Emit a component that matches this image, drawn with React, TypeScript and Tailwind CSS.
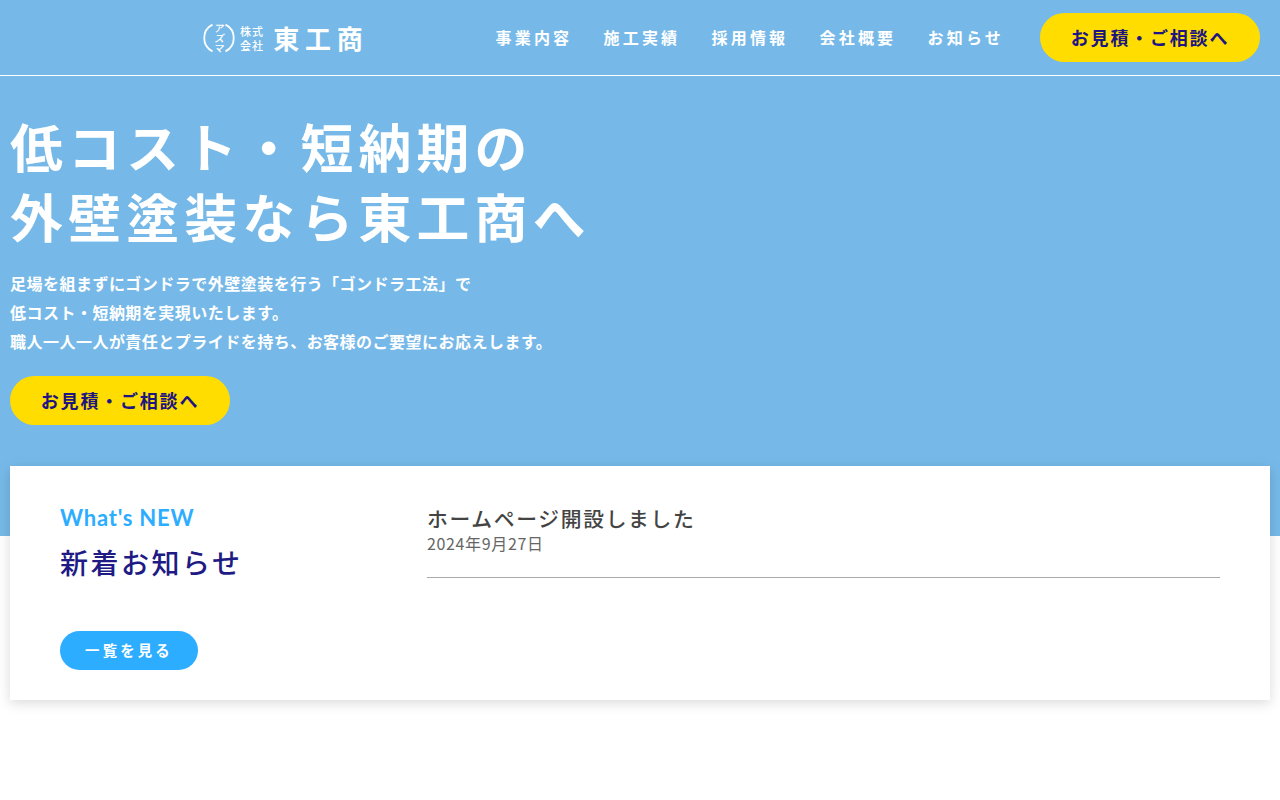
const jp = '"Noto Sans CJK JP", "Noto Sans", sans-serif'

const navItems = ['事業内容', '施工実績', '採用情報', '会社概要', 'お知らせ']

function Logo() {
  return (
    <div className="flex items-center">
      <svg width="32" height="32" viewBox="0 0 32 32" fill="none" className="mr-[5px]">
        <path d="M9.5 2.6A15 15 0 0 0 9.5 29.4" stroke="#fff" strokeWidth="1.8" />
        <path d="M22.5 2.6A15 15 0 0 1 22.5 29.4" stroke="#fff" strokeWidth="1.8" />
        <g fill="#fff" fontSize="10" fontWeight="500" textAnchor="middle" style={{ fontFamily: jp }}>
          <text x="15.5" y="9.5" transform="skewX(-8) translate(1.5 0)">ア</text>
          <text x="16" y="20" transform="skewX(-8) translate(3 0)">ズ</text>
          <text x="16" y="30" transform="skewX(-8) translate(4 0)">マ</text>
        </g>
      </svg>
      <div className="flex flex-col text-white text-[11px] leading-[14px] font-medium tracking-[0.1em] mr-[9px]">
        <span>株式</span>
        <span>会社</span>
      </div>
      <span className="text-white text-[26px] leading-none font-bold tracking-[0.22em] -mr-[5px]">東工商</span>
    </div>
  )
}

export default function App() {
  return (
    <div className="min-h-[800px] bg-white" style={{ fontFamily: jp }}>
      <div className="bg-[#76b9e8] h-[536px]">
        <header className="h-[76px] border-b border-white flex items-center justify-between pl-[203px] pr-5">
          <Logo />
          <nav className="flex items-center">
            <div className="flex items-center gap-[31.2px] mr-[36px]">
              {navItems.map((item) => (
                <a key={item} className="text-white text-base font-bold tracking-[0.2em] pb-px">
                  {item}
                </a>
              ))}
            </div>
            <a className="w-[220px] h-[49px] rounded-full bg-[#ffdd00] text-[#1e1580] text-lg font-bold tracking-[0.1em] flex items-center justify-center pb-px">
              お見積・ご相談へ
            </a>
          </nav>
        </header>

        <section className="px-2.5 pt-[34px]">
          <h1 className="text-white text-[52.8px] leading-[70px] font-bold tracking-[0.1em]">
            低コスト・短納期の
            <br />
            外壁塗装なら東工商へ
          </h1>
          <p className="mt-[19px] text-white text-base leading-[29px] font-bold tracking-[0.03em]">
            足場を組まずにゴンドラで外壁塗装を行う「ゴンドラ工法」で
            <br />
            低コスト・短納期を実現いたします。
            <br />
            職人一人一人が責任とプライドを持ち、お客様のご要望にお応えします。
          </p>
          <a className="mt-[20px] w-[220px] h-[49px] rounded-full bg-[#ffdd00] text-[#1e1580] text-lg font-bold tracking-[0.1em] flex items-center justify-center pb-px">
            お見積・ご相談へ
          </a>
        </section>
      </div>

      <section className="relative -mt-[70px] mx-2.5 h-[234px] bg-white shadow-[0_3px_12px_rgba(0,0,0,0.15)] px-[50px] pt-[37px] flex">
        <div className="w-[367px]">
          <div className="text-[#2dadff] text-[22px] leading-[30px] font-bold tracking-[0.035em]" style={{ fontFamily: 'Lato, sans-serif' }}>
            What's NEW
          </div>
          <h2 className="mt-[9px] text-[#201a85] text-[28px] leading-[40px] font-medium tracking-[0.09em]">新着お知らせ</h2>
          <a className="mt-[49px] w-[138px] h-[39px] rounded-full bg-[#2dadff] text-white text-[14.4px] font-bold tracking-[0.22em] flex items-center justify-center pb-px">
            一覧を見る
          </a>
        </div>
        <div className="flex-1 -mt-px">
          <div className="border-b border-[#aaaaaa] h-[76px]">
            <div className="text-[#444444] text-[20.8px] leading-[33px] font-medium tracking-[0.08em]">ホームページ開設しました</div>
            <div className="text-[#666666] text-base leading-[16px] tracking-[0.04em]">2024年9月27日</div>
          </div>
        </div>
      </section>
    </div>
  )
}
